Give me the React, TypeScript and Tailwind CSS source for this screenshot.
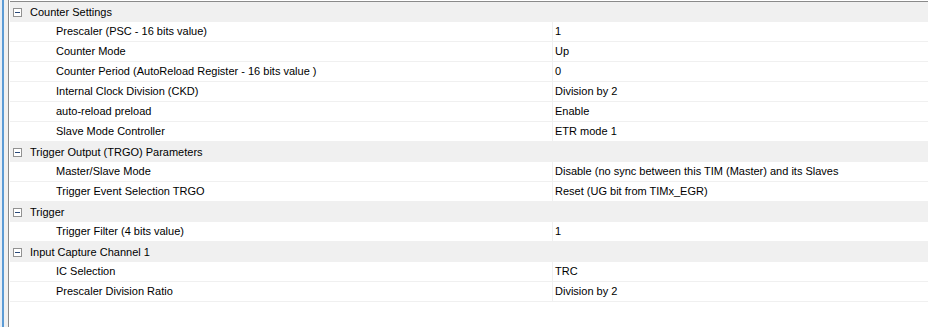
type Row = { group: true; label: string } | { group: false; label: string; value: string }

const rows: Row[] = [
  { group: true, label: 'Counter Settings' },
  { group: false, label: 'Prescaler (PSC - 16 bits value)', value: '1' },
  { group: false, label: 'Counter Mode', value: 'Up' },
  { group: false, label: 'Counter Period (AutoReload Register - 16 bits value )', value: '0' },
  { group: false, label: 'Internal Clock Division (CKD)', value: 'Division by 2' },
  { group: false, label: 'auto-reload preload', value: 'Enable' },
  { group: false, label: 'Slave Mode Controller', value: 'ETR mode 1' },
  { group: true, label: 'Trigger Output (TRGO) Parameters' },
  { group: false, label: 'Master/Slave Mode', value: 'Disable (no sync between this TIM (Master) and its Slaves' },
  { group: false, label: 'Trigger Event Selection TRGO', value: 'Reset (UG bit from TIMx_EGR)' },
  { group: true, label: 'Trigger' },
  { group: false, label: 'Trigger Filter (4 bits value)', value: '1' },
  { group: true, label: 'Input Capture Channel 1' },
  { group: false, label: 'IC Selection', value: 'TRC' },
  { group: false, label: 'Prescaler Division Ratio', value: 'Division by 2' },
]

function MinusBox() {
  return (
    <span className="flex h-[9px] w-[9px] items-center justify-center border border-[#919191] bg-white">
      <span className="h-px w-[5px] bg-[#2a4a7a]" />
    </span>
  )
}

export default function App() {
  return (
    <div
      className="flex h-[327px] w-[928px] overflow-hidden bg-white text-[11px] text-black"
      style={{ fontFamily: '"Liberation Sans", Arial, sans-serif' }}
    >
      {/* left edge of the window */}
      <div className="flex h-full w-[10px] shrink-0">
        <div className="w-[2px] bg-[#e8eef5]" />
        <div className="w-[2px] bg-[#5b9bd5]" />
        <div className="w-[4px] bg-[#f0f0f0]" />
        <div className="w-px bg-[#8a8a8a]" />
        <div className="w-px bg-white" />
      </div>

      <div className="flex min-w-0 flex-1 flex-col">
        <div className="mt-px h-px bg-[#8a8a8a]" />
        {rows.map((r, i) =>
          r.group ? (
            <div key={i} className="flex h-[20px] items-center bg-[#f0f0f0]">
              <span className="ml-[3px] mr-[8px]">
                <MinusBox />
              </span>
              <span>{r.label}</span>
            </div>
          ) : (
            <div key={i} className="flex h-[20px] border-b border-[#f0f0f0]">
              <div className="flex w-[543px] shrink-0 items-center border-r border-[#f0f0f0] pl-[46px]">
                {r.label}
              </div>
              <div className="flex items-center pl-[2px]">{r.value}</div>
            </div>
          ),
        )}
      </div>
    </div>
  )
}
